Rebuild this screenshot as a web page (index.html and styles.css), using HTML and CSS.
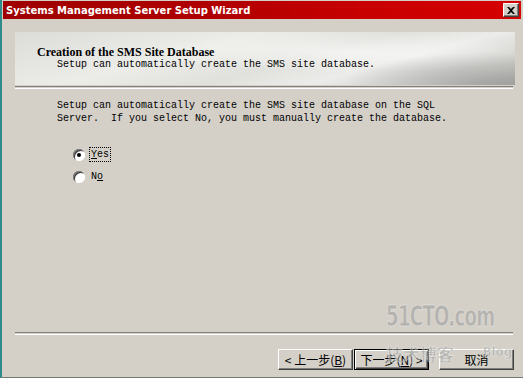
FILE: index.html
```html
<!DOCTYPE html>
<html>
<head>
<meta charset="utf-8">
<link rel="stylesheet" href="styles.css">
</head>
<body>
<div class="window">
  <div class="titlebar">
    <span class="title">Systems Management Server Setup Wizard</span>
    <span class="close">
      <svg width="8" height="7" viewBox="0 0 8 7"><path d="M0 0h2l2 2 2-2h2L5 3.5 8 7H6L4 5 2 7H0l3-3.5z" fill="#000"/></svg>
    </span>
  </div>
  <div class="header">
    <div class="h-title">Creation of the SMS Site Database</div>
    <div class="h-sub">Setup can automatically create the SMS site database.</div>
  </div>
  <div class="sep"></div>
  <div class="content">
    <p class="desc">Setup can automatically create the SMS site database on the SQL<br>Server.&nbsp; If you select No, you must manually create the database.</p>
    <div class="radios">
      <div class="radio-row"><span class="radio checked"></span><span class="label focus"><u>Y</u>es</span></div>
      <div class="radio-row"><span class="radio"></span><span class="label">N<u>o</u></span></div>
    </div>
  </div>
  <div class="sep bottom"></div>
  <div class="buttons">
    <button class="btn">&lt; 上一步(<u>B</u>)</button>
    <button class="btn default">下一步(<u>N</u>) &gt;</button>
    <button class="btn cancel">取消</button>
  </div>
  <div class="watermark">
    <div class="wm-big">51CTO.com</div>
    <div class="wm-small"><span class="wm-cn">技术博客</span><span class="wm-blog">Blog</span></div>
  </div>
</div>
</body>
</html>
```

FILE: styles.css
```css
html, body {
  margin: 0;
  padding: 0;
  width: 523px;
  height: 378px;
  overflow: hidden;
  background: #d4d0c8;
}

.window {
  position: relative;
  box-sizing: border-box;
  width: 523px;
  height: 378px;
  background: #d4d0c8;
  border-left: 2px solid #2f8a8a;
  border-bottom: 1px solid #6f7a78;
  display: flex;
  flex-direction: column;
}

.titlebar {
  box-sizing: border-box;
  height: 18px;
  margin: 1px 2px 0 1px;
  background: linear-gradient(to right, #9e0000 0%, #b00000 40%, #c80000 70%, #d60000 100%);
  display: flex;
  align-items: center;
  justify-content: space-between;
  padding: 0 2px 0 3px;
}

.title {
  color: #fff;
  font-family: "DejaVu Sans", sans-serif;
  font-weight: bold;
  font-size: 10px;
}

.close {
  box-sizing: border-box;
  width: 16px;
  height: 14px;
  background: #d4d0c8;
  border: 1px solid;
  border-color: #fff #404040 #404040 #fff;
  box-shadow: inset -1px -1px 0 #808080;
  display: flex;
  align-items: center;
  justify-content: center;
}

.header {
  box-sizing: border-box;
  margin: 13px 8px 0 13px;
  height: 53px;
  padding: 13px 0 0 22px;
  background:
    radial-gradient(ellipse 140px 30px at 470px 50px, rgba(150,150,150,0.55), rgba(150,150,150,0) 100%),
    radial-gradient(ellipse 200px 20px at 330px 20px, rgba(255,255,255,0.6), rgba(255,255,255,0) 100%),
    linear-gradient(165deg, #dcdcd8 0%, #ecece8 35%, #e0e0dc 55%, #ececea 70%, #c8c8c4 90%, #a8a8a4 100%);
}

.h-title {
  font-family: "Liberation Serif", serif;
  font-weight: bold;
  font-size: 12px;
  line-height: 14px;
  color: #000;
}

.h-sub {
  font-family: "Liberation Mono", monospace;
  font-size: 10px;
  line-height: 12px;
  color: #000;
  padding-left: 20px;
}

.sep {
  margin: 1px 10px 0 13px;
  height: 1px;
  border-top: 1px solid #808080;
  border-bottom: 1px solid #fff;
}

.content {
  height: 243px;
  padding-left: 55px;
}

.desc {
  margin: 10px 0 0 0;
  font-family: "Liberation Mono", monospace;
  font-size: 10px;
  line-height: 13px;
  color: #000;
}

.radios {
  margin: 22px 0 0 16px;
  display: flex;
  flex-direction: column;
  gap: 7px;
}

.radio-row {
  display: flex;
  align-items: center;
  gap: 5px;
  height: 15px;
}

.radio {
  box-sizing: border-box;
  width: 12px;
  height: 12px;
  border-radius: 50%;
  background: #fff;
  box-shadow: inset 1px 1px 0 #808080, inset -1px -1px 0 #fff, inset 2px 2px 0 #404040;
  position: relative;
}

.radio.checked::after {
  content: "";
  position: absolute;
  left: 4px;
  top: 4px;
  width: 4px;
  height: 4px;
  border-radius: 50%;
  background: #000;
}

.label {
  font-family: "Liberation Mono", monospace;
  font-size: 10px;
  line-height: 13px;
  padding: 0 1px;
  color: #000;
}

.label.focus {
  outline: 1px dotted #000;
  outline-offset: 0;
}

.sep.bottom {
  margin: 0 10px 0 13px;
}

.buttons {
  display: flex;
  justify-content: flex-end;
  align-items: flex-start;
  padding: 14px 9px 0 0;
}

.btn {
  box-sizing: border-box;
  width: 75px;
  height: 21px;
  padding: 0;
  background: #d4d0c8;
  font-family: "Noto Sans CJK SC", sans-serif;
  font-size: 12px;
  line-height: 12px;
  color: #000;
  border: 1px solid;
  border-color: #fff #404040 #404040 #fff;
  box-shadow: inset -1px -1px 0 #808080;
}

.btn.default {
  border: 1px solid #000;
  box-shadow: inset 1px 1px 0 #fff, inset -1px -1px 0 #404040, inset -2px -2px 0 #808080;
  margin-left: 1px;
}

.btn.cancel {
  margin-left: 10px;
}

.watermark {
  position: absolute;
  left: 384px;
  top: 302px;
  width: 130px;
  pointer-events: none;
  color: rgba(150,150,150,0.5);
  -webkit-text-stroke: 0.5px rgba(255,255,255,0.6);
}

.wm-big {
  font-family: "DejaVu Sans Condensed", "DejaVu Sans", sans-serif;
  font-weight: bold;
  font-size: 28px;
  line-height: 30px;
  letter-spacing: -1px;
  white-space: nowrap;
  transform: scaleX(0.72);
  transform-origin: left top;
}

.wm-small {
  display: flex;
  align-items: flex-start;
  justify-content: space-between;
  width: 126px;
  margin-top: 12px;
}

.wm-cn {
  font-family: "Noto Sans CJK SC", sans-serif;
  font-weight: bold;
  font-size: 17px;
  line-height: 20px;
}

.wm-blog {
  font-family: "DejaVu Sans Condensed", "DejaVu Sans", sans-serif;
  font-weight: bold;
  font-size: 13px;
  line-height: 16px;
}
```
